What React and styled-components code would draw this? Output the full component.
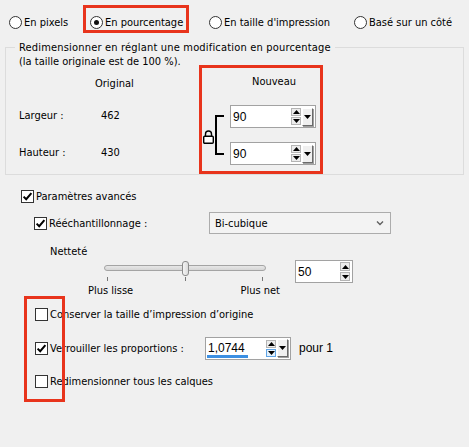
import styled, { createGlobalStyle } from "styled-components";

const GlobalStyle = createGlobalStyle`
  html, body {
    margin: 0;
    padding: 0;
    background: #f0f0f0;
  }
`;

const RED = "#e8341c";
const sharpness = 50;

const App = () => {
  return (
    <Page>
      <GlobalStyle />
      <RadioRow>
        <Radio label="En pixels" />
        <Highlight>
          <Radio label="En pourcentage" checked boxed />
        </Highlight>
        <Radio label="En taille d'impression" />
        <Radio label="Basé sur un côté" />
      </RadioRow>

      <Group>
        <Legend>Redimensionner en réglant une modification en pourcentage</Legend>
        <Note>(la taille originale est de 100 %).</Note>
        <GroupBody>
          <SizeTable>
            <span />
            <span>Original</span>
            <span>Largeur :</span>
            <ValueCell>462</ValueCell>
            <span>Hauteur :</span>
            <ValueCell>430</ValueCell>
          </SizeTable>
          <NewBox>
            <NewHead>Nouveau</NewHead>
            <LinkArea>
              <LockIcon />
              <Bracket />
              <Fields>
                <SpinCombo value="90" dropdown />
                <SpinCombo value="90" dropdown />
              </Fields>
            </LinkArea>
          </NewBox>
        </GroupBody>
      </Group>

      <CheckRow $indent={21} $top={13}>
        <Check checked />
        <span>Paramètres avancés</span>
      </CheckRow>

      <CheckRow $indent={34} $top={8}>
        <Check checked />
        <LabelSpan $width={158}>Rééchantillonnage :</LabelSpan>
        <Select>
          <span>Bi-cubique</span>
          <Chevron viewBox="0 0 8 6">
            <path d="M1 1.5 L4 4.5 L7 1.5" fill="none" stroke="#606060" strokeWidth="1.4" />
          </Chevron>
        </Select>
      </CheckRow>

      <SubLabel>Netteté</SubLabel>

      <SliderRow>
        <SliderBlock>
          <TrackArea>
            <Track />
            <Thumb style={{ left: `${sharpness}%` }} />
          </TrackArea>
          <Ticks>
            <Tick />
            <Tick />
            <Tick />
          </Ticks>
          <SliderLabels>
            <span>Plus lisse</span>
            <span>Plus net</span>
          </SliderLabels>
        </SliderBlock>
        <SpinCombo value={String(sharpness)} width={58} tall />
      </SliderRow>

      <CheckList>
        <Annotation />
        <ListRow>
          <Check />
          <span>Conserver la taille d’impression d’origine</span>
        </ListRow>
        <ListRow>
          <Check checked />
          <LabelSpan $width={153}>Verrouiller les proportions :</LabelSpan>
          <SpinCombo value="1,0744" dropdown underline hover />
          <Suffix>pour 1</Suffix>
        </ListRow>
        <ListRow>
          <Check />
          <span>Redimensionner tous les calques</span>
        </ListRow>
      </CheckList>
    </Page>
  );
};

const Radio = ({ label, checked, boxed }) => (
  <RadioItem $boxed={boxed}>
    <RadioDot $checked={checked} />
    <span>{label}</span>
  </RadioItem>
);

const Check = ({ checked }) => (
  <CheckBox>
    {checked && (
      <svg width="11" height="11" viewBox="0 0 11 11">
        <path d="M1.6 5.6 L4.2 8.2 L9.4 2.2" fill="none" stroke="#000" strokeWidth="2" />
      </svg>
    )}
  </CheckBox>
);

const LockIcon = () => (
  <LockSvg width="11" height="14" viewBox="0 0 11 14">
    <path d="M2.5 6 V4 a3 3 0 0 1 6 0 V6" fill="none" stroke="#000" strokeWidth="1.4" />
    <rect x="0.7" y="6.2" width="9.6" height="7" rx="1" fill="#fff" stroke="#000" strokeWidth="1.4" />
  </LockSvg>
);

const Arrow = ({ up }) => (
  <svg width="7" height="4" viewBox="0 0 7 4">
    <path d={up ? "M0 4 L3.5 0 L7 4 Z" : "M0 0 L3.5 4 L7 0 Z"} fill="#000" />
  </svg>
);

const SpinCombo = ({ value, dropdown, underline, hover, width = 86, tall }) => (
  <Spin $width={width}>
    <SpinText>
      {value}
      {underline && <Underline />}
    </SpinText>
    <SpinButtons $tall={tall}>
      <SpinButton>
        <Arrow up />
      </SpinButton>
      <SpinButton $hover={hover}>
        <Arrow />
      </SpinButton>
    </SpinButtons>
    {dropdown && (
      <DropButton>
        <Arrow />
      </DropButton>
    )}
  </Spin>
);

const Page = styled.div`
  width: 469px;
  height: 447px;
  background: #f0f0f0;
  font-family: "DejaVu Sans Condensed", "DejaVu Sans", sans-serif;
  font-size: 11px;
  color: #000;
  overflow: hidden;
`;

const RadioRow = styled.div`
  display: grid;
  grid-template-columns: 74px 126px 145px auto;
  align-items: end;
  padding: 5px 0 0 9px;
`;

const Highlight = styled.div`
  box-sizing: border-box;
  width: 106px;
  height: 28px;
  border: 3px solid ${RED};
  display: flex;
  align-items: flex-end;
  padding: 0 0 1px 4px;
`;

const RadioItem = styled.label`
  display: flex;
  align-items: center;
  gap: 2px;
  white-space: nowrap;
  margin-bottom: ${(p) => (p.$boxed ? 0 : 4)}px;
`;

const RadioDot = styled.span`
  box-sizing: border-box;
  flex: none;
  width: 13px;
  height: 13px;
  border: 1px solid #333;
  border-radius: 50%;
  background: #fff;
  display: flex;
  align-items: center;
  justify-content: center;

  &::after {
    content: "";
    display: ${(p) => (p.$checked ? "block" : "none")};
    width: 5px;
    height: 5px;
    border-radius: 50%;
    background: #111;
  }
`;

const Group = styled.fieldset`
  margin: 8px 5px 0;
  padding: 0;
  border: 1px solid #dcdcdc;
  min-width: 0;
`;

const Legend = styled.legend`
  margin-left: 9px;
  padding: 0 4px;
  line-height: 13px;
  letter-spacing: 0.18px;
`;

const Note = styled.div`
  padding-left: 13px;
  line-height: 15px;
`;

const GroupBody = styled.div`
  display: flex;
  align-items: flex-start;
  margin-top: -4px;
  padding-left: 13px;
`;

const SizeTable = styled.div`
  width: 180px;
  padding-top: 4px;
  display: grid;
  grid-template-columns: 76px auto;
  grid-template-rows: 28px 37px 37px;
  align-items: center;
`;

const ValueCell = styled.span`
  padding-left: 6px;
`;

const NewBox = styled.div`
  box-sizing: border-box;
  width: 124px;
  height: 109px;
  border: 3px solid ${RED};
`;

const NewHead = styled.div`
  height: 28px;
  line-height: 28px;
  padding-left: 50px;
  margin-bottom: 9px;
`;

const LinkArea = styled.div`
  display: flex;
  align-items: center;
`;

const LockSvg = styled.svg`
  display: block;
  margin: 3px 0 0 1px;
`;

const Bracket = styled.div`
  width: 7px;
  height: 36px;
  margin-left: 1px;
  border: 2px solid #000;
  border-right: none;
`;

const Fields = styled.div`
  display: flex;
  flex-direction: column;
  gap: 14px;
  margin-left: 6px;
`;

const Spin = styled.div`
  box-sizing: border-box;
  width: ${(p) => p.$width}px;
  height: 23px;
  border: 1px solid #a2a2a2;
  background: #fff;
  display: flex;
  align-items: center;
  padding-right: 1px;
`;

const SpinText = styled.div`
  position: relative;
  flex: 1;
  align-self: stretch;
  display: flex;
  align-items: center;
  padding-left: 2px;
  font-family: "Liberation Sans", Arial, sans-serif;
  font-size: 12px;
`;

const Underline = styled.span`
  position: absolute;
  left: 1px;
  bottom: 1px;
  width: 41px;
  height: 3px;
  background: #3c8fe2;
`;

const SpinButtons = styled.div`
  display: flex;
  flex-direction: column;
  gap: 1px;
  margin-right: 1px;
  height: ${(p) => (p.$tall ? 19 : 17)}px;
`;

const SpinButton = styled.div`
  box-sizing: border-box;
  flex: 1;
  width: 10px;
  border: 1px solid ${(p) => (p.$hover ? "#5fa4e6" : "#b4b4b4")};
  background: ${(p) => (p.$hover ? "#e3f0fb" : "#ececec")};
  display: flex;
  align-items: center;
  justify-content: center;
`;

const DropButton = styled.div`
  box-sizing: border-box;
  width: 11px;
  height: 18px;
  background: #f0f0f0;
  border-top: 1px solid #fff;
  border-left: 1px solid #fff;
  border-right: 1px solid #6a6a6a;
  border-bottom: 1px solid #6a6a6a;
  box-shadow: 1px 1px 0 #a0a0a0;
  display: flex;
  align-items: center;
  justify-content: center;
  margin-right: 1px;
`;

const CheckRow = styled.div`
  display: flex;
  align-items: center;
  gap: 2px;
  padding-left: ${(p) => p.$indent}px;
  margin-top: ${(p) => p.$top}px;
  min-height: 16px;
`;

const CheckBox = styled.span`
  box-sizing: border-box;
  flex: none;
  width: 13px;
  height: 13px;
  border: 1px solid #333;
  background: #fff;
  display: flex;
  align-items: center;
  justify-content: center;
`;

const LabelSpan = styled.span`
  width: ${(p) => p.$width}px;
  white-space: nowrap;
`;

const Select = styled.div`
  box-sizing: border-box;
  width: 182px;
  height: 22px;
  border: 1px solid #acacac;
  background: #f3f3f3;
  display: flex;
  align-items: center;
  justify-content: space-between;
  padding: 0 6px 0 5px;
`;

const Chevron = styled.svg`
  width: 8px;
  height: 6px;
`;

const SubLabel = styled.div`
  padding-left: 50px;
  margin-top: 11px;
  line-height: 14px;
`;

const SliderRow = styled.div`
  display: flex;
  align-items: flex-start;
  padding-left: 100px;
  margin-top: 1px;
`;

const SliderBlock = styled.div`
  width: 170px;
  margin-right: 25px;
`;

const TrackArea = styled.div`
  position: relative;
  height: 16px;
  margin: 0 4px;
  display: flex;
  align-items: center;
`;

const Track = styled.div`
  box-sizing: border-box;
  width: 100%;
  height: 6px;
  border: 1px solid #a4a4a4;
  border-radius: 3px;
  background: linear-gradient(#e7e7e7, #d6d6d6);
`;

const Thumb = styled.div`
  position: absolute;
  top: 1px;
  box-sizing: border-box;
  width: 7px;
  height: 15px;
  margin-left: -3px;
  border: 1px solid #8c8c8c;
  border-radius: 3px;
  background: linear-gradient(90deg, #f5f5f5, #dcdcdc);
`;

const Ticks = styled.div`
  display: flex;
  justify-content: space-between;
  margin: 0 7px;
  height: 6px;
`;

const Tick = styled.span`
  width: 1px;
  height: 4px;
  margin-top: 1px;
  background: #777;
`;

const SliderLabels = styled.div`
  display: flex;
  justify-content: space-between;
  margin: 2px -10px 0 -12px;
  line-height: 14px;
`;

const CheckList = styled.div`
  position: relative;
  display: flex;
  flex-direction: column;
  gap: 10.5px;
  padding-left: 35px;
  margin-top: 5px;
`;

const ListRow = styled.div`
  display: flex;
  align-items: center;
  gap: 2px;
  height: 23px;
`;

const Suffix = styled.span`
  margin-left: 6px;
  font-family: "Liberation Sans", Arial, sans-serif;
  font-size: 12px;
`;

const Annotation = styled.div`
  position: absolute;
  left: 24px;
  top: -7px;
  box-sizing: border-box;
  width: 41px;
  height: 106px;
  border: 3px solid ${RED};
  pointer-events: none;
`;

export default App;
